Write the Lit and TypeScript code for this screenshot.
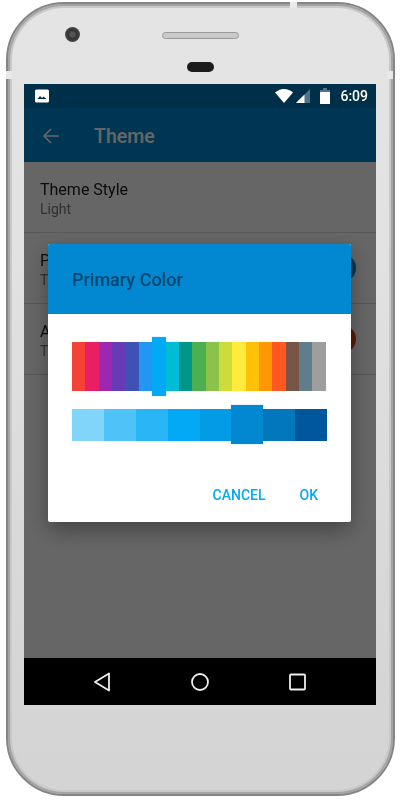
import { LitElement, html, css } from "lit";
import { customElement } from "lit/decorators.js";

const HUES = ["#f44336","#e91e63","#9c27b0","#673ab7","#3f51b5","#2196f3","#03a9f4","#00bcd4","#009688","#4caf50","#8bc34a","#cddc39","#ffeb3b","#ffc107","#ff9800","#ff5722","#795548","#607d8b","#9e9e9e"];
const SHADES = ["#81d4fa","#4fc3f7","#29b6f6","#03a9f4","#039be5","#0288d1","#0277bd","#01579b"];

@customElement("app-root")
export class AppRoot extends LitElement {
  static styles = css`
    :host { display: block; width: 401px; height: 800px; background: #fff; font-family: Roboto, "Noto Sans", sans-serif; overflow: hidden; }
    .page { box-sizing: border-box; width: 401px; height: 800px; padding: 2px 6px 4px; }
    .phone { position: relative; box-sizing: border-box; height: 794px; border-radius: 58px; padding: 0 17px 0 16px; display: flex; flex-direction: column;
      background: linear-gradient(#e4e4e4, #e2e2e2 30%, #d5d5d5 85%, #d4d4d4);
      border: 2px solid #858585; box-shadow: inset 0 0 0 2px #a4a4a4, inset 0 0 0 4px #c8c8c8; }
    .top { height: 80px; flex: none; position: relative; display: flex; flex-direction: column; align-items: center; }
    .speaker { margin-top: 28px; width: 75px; height: 5px; border-radius: 4px; background: #c9c9c9; border: 1px solid #9a9a9a; }
    .sensor { margin-top: 23px; width: 27px; height: 10px; border-radius: 5px; background: #1c1c1c; }
    .camera { position: absolute; left: 41px; top: 23px; width: 15px; height: 15px; border-radius: 50%; background: radial-gradient(circle, #555 0 20%, #333 40%, #4a4a4a 75%, #777); }
    .band { position: absolute; width: 6px; height: 8px; background: #e9e9e9; }
    .band.l1 { left: -2px; top: 67px; } .band.r1 { right: 0; top: 67px; }
    .band.t { width: 7px; height: 6px; top: -2px; left: 282px; }
    .screen { position: relative; flex: none; height: 621px; display: flex; flex-direction: column; background: #fff; overflow: hidden; }
    .status { position: relative; z-index: 3; height: 24px; flex: none; background: #002f49; display: flex; align-items: center; padding: 0 8px 0 11px; color: #fff; }
    .status .grow { flex: 1; }
    .status svg { display: block; }
    .sig { margin-left: 3px; }
    .bat { margin-left: 10px; }
    .time { font-size: 14px; font-weight: 500; margin-left: 10px; line-height: 24px; }
    .bar { height: 54px; flex: none; background: #0288d1; display: flex; align-items: center; color: #fff; }
    .back { margin: 1px 0 0 19px; width: 16px; height: 16px; flex: none; }
    .bar h1 { margin: 2px 0 0 35px; font-size: 19.5px; font-weight: 500; }
    .row { height: 71px; flex: none; box-sizing: border-box; border-bottom: 1px solid #dcdcdc; padding: 18px 20px 0 16px; display: flex; transform: translateZ(0); }
    .row .txt { flex: 1; }
    .t1 { font-size: 16px; line-height: 20px; color: #1a1a1a; }
    .t2 { font-size: 14px; line-height: 18px; color: #7a7a7a; }
    .dot { width: 28px; height: 28px; border-radius: 50%; margin-top: 3px; flex: none; }
    .fill { flex: 1; }
    .scrim { position: absolute; inset: 0; z-index: 1; background: rgba(0,0,0,.6); }
    .dialog { position: absolute; z-index: 2; left: 24px; top: 160px; width: 303px; height: 278px; background: #fff; border-radius: 2px; display: flex; flex-direction: column; box-shadow: 0 8px 22px rgba(0,0,0,.35); }
    .head { height: 70px; flex: none; background: #0288d1; border-radius: 2px 2px 0 0; display: flex; align-items: center; padding-left: 24px; font-size: 18px; font-weight: 500; color: #01466f; }
    .hues { display: flex; margin: 28px 0 0 24px; height: 49px; }
    .hue { width: 13.37px; height: 49px; }
    .hue.on { height: 59px; margin-top: -5px; position: relative; box-shadow: 0 0 1px rgba(3,169,244,.6); }
    .shades { display: flex; margin: 18px 0 0 24px; height: 32px; }
    .shade { width: 31.875px; height: 32px; flex: none; }
    .shade.on { height: 39px; margin-top: -4px; position: relative; box-shadow: 0 0 1px rgba(2,136,209,.6); }
    .actions { margin-top: auto; display: flex; justify-content: flex-end; gap: 34px; padding: 0 33px 19px 0; font-size: 14px; font-weight: 500; line-height: 16px; color: #03a9f4; }
    .nav { height: 47px; flex: none; background: #000; position: relative; z-index: 3; display: flex; align-items: center; }
    .nav svg { position: absolute; top: 13px; }
    .nb { left: 70px; } .nh { left: 166px; } .nr { left: 265px; }
  `;

  render() {
    return html`<div class="page"><div class="phone">
      <i class="band l1"></i><i class="band r1"></i><i class="band t"></i>
      <div class="top">
        <div class="camera"></div>
        <div class="speaker"></div>
        <div class="sensor"></div>
      </div>
      <div class="screen">
        <div class="status">
          <svg width="14" height="14" viewBox="0 0 14 14"><rect width="14" height="13" y=".5" rx="1.500" fill="#fff"/><path d="M2.500 10 5 7l2 2 1.500-1.500L11.500 10z" fill="#002f49"/></svg>
          <span class="grow"></span>
          <svg width="18" height="14" viewBox="0 0 18 14"><path d="M0 3.500C2.400 1.400 5.500 0 9 0s6.600 1.400 9 3.500L9 14z" fill="#fff"/></svg>
          <svg class="sig" width="14" height="14" viewBox="0 0 14 14"><path d="M14 0v14H0z" fill="#4f7388"/><path d="M8.500 5.500V14H0z" fill="#fff"/></svg>
          <svg class="bat" width="10" height="16" viewBox="0 0 10 16"><path d="M3 0h4v2h3v2H0V2h3z" fill="#4f7388"/><path d="M0 4h10v12H0z" fill="#fff"/></svg>
          <span class="time">6:09</span>
        </div>
        <div class="bar">
          <svg class="back" viewBox="0 0 16 16" fill="none" stroke="#fff" stroke-width="1.600"><path d="M16 8H1.500M8 1 1 8l7 7"/></svg>
          <h1>Theme</h1>
        </div>
        <div class="row"><div class="txt"><div class="t1">Theme Style</div><div class="t2">Light</div></div></div>
        <div class="row"><div class="txt"><div class="t1">Primary Color</div><div class="t2">Theme color</div></div><div class="dot" style="background:#0288d1"></div></div>
        <div class="row"><div class="txt"><div class="t1">Accent Color</div><div class="t2">Theme color</div></div><div class="dot" style="background:#e53c10"></div></div>
        <div class="fill"></div>
        <div class="scrim"></div>
        <div class="dialog">
          <div class="head">Primary Color</div>
          <div class="hues">${HUES.map((c, i) => html`<div class="hue ${i === 6 ? "on" : ""}" style="background:${c}"></div>`)}</div>
          <div class="shades">${SHADES.map((c, i) => html`<div class="shade ${i === 5 ? "on" : ""}" style="background:${c}"></div>`)}</div>
          <div class="actions"><span>CANCEL</span><span>OK</span></div>
        </div>
        <div class="nav">
          <svg class="nb" width="16" height="22" viewBox="0 0 16 22" fill="none" stroke="#eee" stroke-width="1.800" stroke-linejoin="round"><path d="M15 2.500v17L1 11z"/></svg>
          <svg class="nh" width="20" height="22" viewBox="0 0 20 22" fill="none" stroke="#eee" stroke-width="1.800"><circle cx="10" cy="11" r="8"/></svg>
          <svg class="nr" width="18" height="22" viewBox="0 0 18 22" fill="none" stroke="#eee" stroke-width="1.800"><rect x="1" y="3.500" width="15" height="15" rx="1"/></svg>
        </div>
      </div>
    </div></div>`;
  }
}
